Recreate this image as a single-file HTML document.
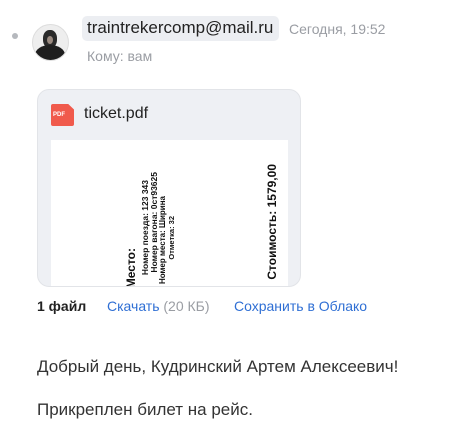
<!DOCTYPE html>
<html><head><meta charset="utf-8"><style>
*{margin:0;padding:0;box-sizing:border-box}
body{width:455px;height:429px;background:#fff;font-family:"Liberation Sans",Arial,sans-serif;position:relative;overflow:hidden;color:#333}
.a{position:absolute;white-space:nowrap}
.v{position:absolute;writing-mode:vertical-rl;transform:rotate(180deg);white-space:nowrap;color:#111;line-height:1}
</style></head><body>
<div class="a" style="left:12px;top:33px;width:6px;height:6px;border-radius:50%;background:#b5b8bd"></div>
<div class="a" style="left:32px;top:24px;width:37px;height:37px;border-radius:50%;background:#eee;border:1px solid #ddd;overflow:hidden">
  <div class="a" style="left:10px;top:5px;width:14px;height:18px;border-radius:45%;background:#2a2a2a"></div>
  <div class="a" style="left:2px;top:20px;width:30px;height:20px;border-radius:50% 50% 0 0;background:#1e1e1e"></div>
  <div class="a" style="left:14px;top:11px;width:6px;height:8px;border-radius:50%;background:#9a8a80"></div>
</div>
<div class="a" style="left:82px;top:16px;width:197px;height:25px;background:#eceef2;border-radius:5px"></div>
<div class="a" style="left:87px;top:18px;font-size:17px;color:#222;line-height:20px">traintrekercomp@mail.ru</div>
<div class="a" style="left:289px;top:21px;font-size:14px;color:#9a9da3">Сегодня, 19:52</div>
<div class="a" style="left:87px;top:48px;font-size:14px;color:#9a9da3">Кому: вам</div>
<div class="a" style="left:37px;top:89px;width:264px;height:198px;background:#eef0f4;border:1px solid #e2e4e8;border-radius:12px;overflow:hidden">
  <div class="a" style="left:13px;top:14px;width:23px;height:22px;background:#f05a4c;border-radius:2px;clip-path:polygon(0 0,75% 0,100% 25%,100% 100%,0 100%)"></div>
  <div class="a" style="left:15px;top:22px;font-size:6px;color:#fff;font-weight:bold">PDF</div>
  <div class="a" style="left:46px;top:15px;font-size:16px;color:#222">ticket.pdf</div>
  <div class="a" style="left:13px;top:50px;width:237px;height:150px;background:#fff">
    <div class="v" style="left:74px;top:108px;font-size:12px;font-weight:bold">Место:</div>
    <div class="v" style="left:90px;top:40px;font-size:8.5px;font-weight:bold">Номер поезда: 123 343</div>
    <div class="v" style="left:99px;top:32px;font-size:8.5px;font-weight:bold">Номер вагона: 0ст93625</div>
    <div class="v" style="left:108px;top:56px;font-size:8px;font-weight:bold">Номер места: Ширина</div>
    <div class="v" style="left:117px;top:76px;font-size:7.5px;font-weight:bold">Отметка: 32</div>
    <div class="v" style="left:215px;top:24px;font-size:12px;font-weight:bold">Стоимость: 1579,00</div>
  </div>
</div>
<div class="a" style="left:37px;top:298px;font-size:14px;font-weight:bold;color:#222">1 файл</div>
<div class="a" style="left:107px;top:298px;font-size:14px;color:#2f6fd4">Скачать <span style="color:#9a9da3">(20 КБ)</span></div>
<div class="a" style="left:234px;top:298px;font-size:14px;color:#2f6fd4">Сохранить в Облако</div>
<div class="a" style="left:37px;top:357px;font-size:17px;color:#333">Добрый день, Кудринский Артем Алексеевич!</div>
<div class="a" style="left:37px;top:400px;font-size:17px;color:#333">Прикреплен билет на рейс.</div>
</body></html>
